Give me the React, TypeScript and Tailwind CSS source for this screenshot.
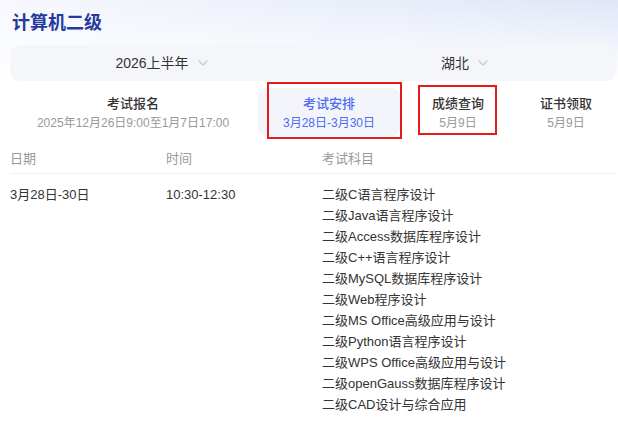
import React from 'react';

const subjects = [
  '二级C语言程序设计',
  '二级Java语言程序设计',
  '二级Access数据库程序设计',
  '二级C++语言程序设计',
  '二级MySQL数据库程序设计',
  '二级Web程序设计',
  '二级MS Office高级应用与设计',
  '二级Python语言程序设计',
  '二级WPS Office高级应用与设计',
  '二级openGauss数据库程序设计',
  '二级CAD设计与综合应用',
];

function Chevron() {
  return (
    <svg width="10" height="6" viewBox="0 0 10 6" fill="none" className="ml-[9px]">
      <path d="M1 1l4 4 4-4" stroke="#c3c7cf" strokeWidth="1.2" strokeLinecap="round" strokeLinejoin="round" />
    </svg>
  );
}

export default function App() {
  return (
    <div className="w-[618px] h-[421px] overflow-hidden bg-white">
      <div className="w-[626px] shrink-0 font-['Liberation_Sans','Noto_Sans_CJK_SC',sans-serif] text-[#333]">
        <div className="bg-[linear-gradient(to_bottom,rgba(255,255,255,0)_0%,#ffffff_100%),linear-gradient(to_right,#f6f8fd_0%,#dfe6f7_100%)] pt-[12px]">
          <h1 className="px-[12px] text-[18px] leading-[23px] font-bold text-[#26399d]">计算机二级</h1>
          <div className="mx-[10px] mt-[10px] h-[36px] rounded-[10px] bg-[#f5f6fa] flex text-[14px]">
            <button className="flex-1 flex items-center justify-center text-[#333]">
              2026上半年
              <Chevron />
            </button>
            <button className="flex-1 flex items-center justify-center text-[#333]">
              湖北
              <Chevron />
            </button>
          </div>
        </div>

        <div className="flex px-[10px] mt-[7px] h-[48px]">
          <div className="w-[246px] shrink-0 flex flex-col items-center justify-center pt-[2px]">
            <div className="text-[13px] leading-[18px] font-medium text-[#333]">考试报名</div>
            <div className="text-[12px] leading-[17px] mt-[2px] text-[#999]">2025年12月26日9:00至1月7日17:00</div>
          </div>
          <div className="relative shrink-0 ml-[2px] w-[142px] rounded-[8px] bg-[#f3f5fa] flex flex-col items-center justify-center pt-[2px]">
            <div className="text-[13px] leading-[18px] font-medium text-[#4d6bf3]">考试安排</div>
            <div className="text-[12px] leading-[17px] mt-[2px] text-[#4d6bf3]">3月28日-3月30日</div>
            <div className="absolute left-[9px] right-[-2px] top-[-6px] bottom-[-3px] border-2 border-[#e41b1b]" />
          </div>
          <div className="relative shrink-0 w-[116px] flex flex-col items-center justify-center pt-[2px]">
            <div className="text-[13px] leading-[18px] font-medium text-[#333]">成绩查询</div>
            <div className="text-[12px] leading-[17px] mt-[2px] text-[#999]">5月9日</div>
            <div className="absolute left-[18px] right-[19px] top-[-3px] bottom-[1px] border-2 border-[#e41b1b]" />
          </div>
          <div className="w-[100px] shrink-0 flex flex-col items-center justify-center pt-[2px]">
            <div className="text-[13px] leading-[18px] font-medium text-[#333]">证书领取</div>
            <div className="text-[12px] leading-[17px] mt-[2px] text-[#999]">5月9日</div>
          </div>
        </div>

        <div className="mx-[10px] mt-[14px]">
          <div className="grid grid-cols-[156px_156px_1fr] text-[13px] leading-[18px] text-[#999] pb-[5px] border-b border-[#f0f0f0]">
            <div>日期</div>
            <div>时间</div>
            <div>考试科目</div>
          </div>
          <div className="grid grid-cols-[156px_156px_1fr] text-[13px] leading-[21px] text-[#333] pt-[10px]">
            <div>3月28日-30日</div>
            <div>10:30-12:30</div>
            <div className="flex flex-col">
              {subjects.map((s) => (
                <div key={s}>{s}</div>
              ))}
            </div>
          </div>
        </div>
      </div>
    </div>
  );
}
